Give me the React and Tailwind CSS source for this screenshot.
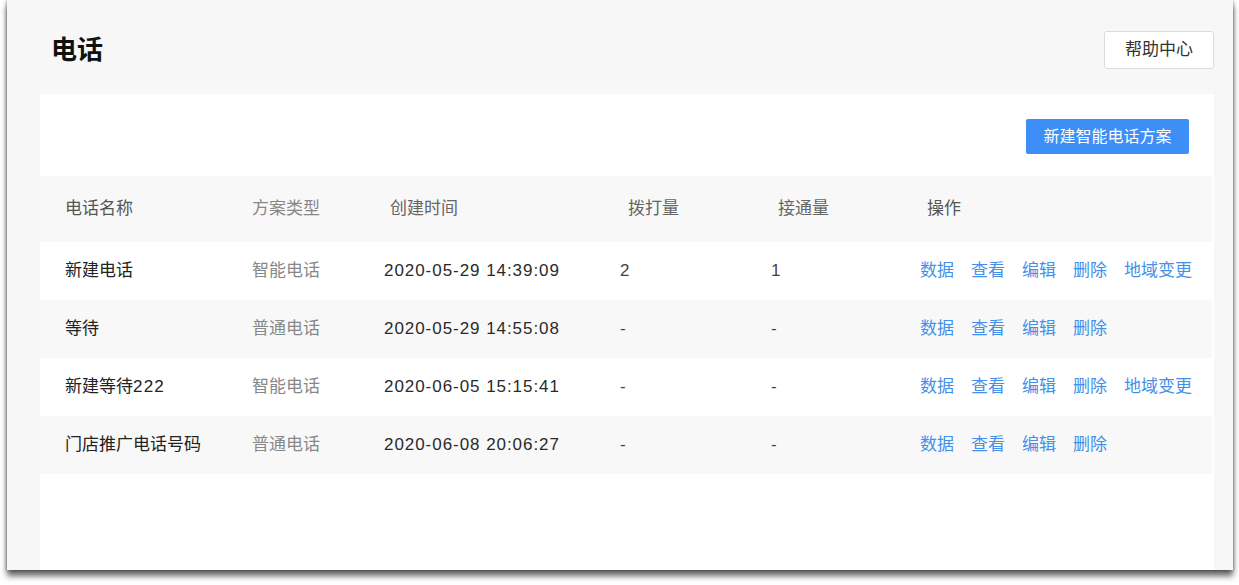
const rows = [
  { name: "新建电话", type: "智能电话", time: "2020-05-29 14:39:09", dial: "2", conn: "1", region: true },
  { name: "等待", type: "普通电话", time: "2020-05-29 14:55:08", dial: "-", conn: "-", region: false },
  { name: "新建等待", suffix: "222", type: "智能电话", time: "2020-06-05 15:15:41", dial: "-", conn: "-", region: true },
  { name: "门店推广电话号码", type: "普通电话", time: "2020-06-08 20:06:27", dial: "-", conn: "-", region: false },
];

const cols = "grid grid-cols-[187px_132px_236px_151px_150px_1fr]";

export default function App() {
  return (
    <div
      className="h-[585px] w-[1239px] overflow-hidden bg-white"
      style={{ fontFamily: "'Liberation Sans', 'Noto Sans CJK SC', sans-serif" }}
    >
      {/* window */}
      <div className="ml-[7px] flex h-[570px] w-[1226px] flex-col bg-[#f7f7f7] shadow-[0_6px_6px_rgba(0,0,0,0.6),1px_0_3px_rgba(0,0,0,0.2),-1px_0_3px_rgba(0,0,0,0.25)]">
        {/* page header */}
        <div className="flex h-[94px] items-center justify-between pl-[44px] pr-[19px] pt-[6px]">
          <h1 className="text-[26px] font-bold text-[#111]">电话</h1>
          <button className="h-[38px] w-[110px] rounded-[3px] border border-[#dcdcdc] bg-white text-[17px] text-[#333]">
            帮助中心
          </button>
        </div>

        {/* card */}
        <div className="ml-[33px] mr-[19px] flex-1 bg-white pr-[2px]">
          <div className="flex justify-end pr-[23px] pt-[25px]">
            <button className="h-[35px] w-[163px] rounded-[2px] bg-[#3d8ef7] text-[16px] text-white">
              新建智能电话方案
            </button>
          </div>

          <div className="mt-[22px]">
            <div className={`${cols} h-[66px] items-center bg-[#f8f8f8] text-[17px] text-[#666]`}>
              <div className="pl-[25px] text-[#555]">电话名称</div>
              <div className="pl-[25px] text-[#888]">方案类型</div>
              <div className="pl-[31px]">创建时间</div>
              <div className="pl-[33px]">拨打量</div>
              <div className="pl-[32px]">接通量</div>
              <div className="pl-[31px] text-[#555]">操作</div>
            </div>

            {rows.map((r, i) => (
              <div
                key={i}
                className={`${cols} h-[58px] items-center text-[17px] text-[#333] ${i % 2 === 1 ? "bg-[#f8f8f8]" : "bg-white"}`}
              >
                <div className="pl-[25px] text-[#222]">
                  {r.name}
                  {r.suffix && <span className="tracking-[1.2px]">{r.suffix}</span>}
                </div>
                <div className="pl-[25px] text-[#888]">{r.type}</div>
                <div className="pl-[25px] tracking-[0.95px] text-[#2a2a2a]">{r.time}</div>
                <div className="pl-[25px] text-[#444]">{r.dial}</div>
                <div className="pl-[25px] text-[#444]">{r.conn}</div>
                <div className="flex gap-[17px] pl-[24px] text-[#4390ea]">
                  <a>数据</a>
                  <a>查看</a>
                  <a>编辑</a>
                  <a>删除</a>
                  {r.region && <a>地域变更</a>}
                </div>
              </div>
            ))}
          </div>
        </div>
      </div>
    </div>
  );
}
